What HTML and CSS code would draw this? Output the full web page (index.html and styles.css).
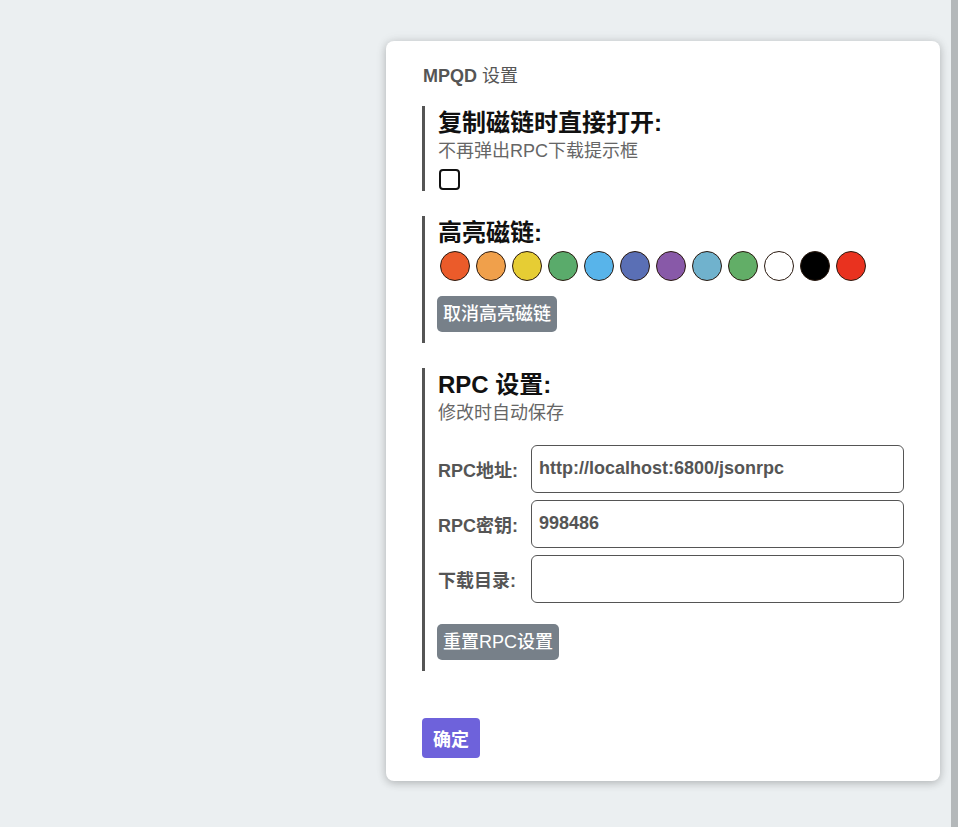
FILE: index.html
```html
<!DOCTYPE html>
<html lang="zh">
<head>
<meta charset="utf-8">
<title>MPQD 设置</title>
<link rel="stylesheet" href="styles.css">
</head>
<body>
<div class="page">
  <div class="card">
    <div class="card-title"><b class="brand">MPQD</b> 设置</div>

    <section class="group">
      <h2 class="group-title">复制磁链时直接打开:</h2>
      <div class="group-sub">不再弹出RPC下载提示框</div>
      <input class="check" type="checkbox">
    </section>

    <section class="group">
      <h2 class="group-title">高亮磁链:</h2>
      <div class="swatches">
        <span class="swatch c1"></span>
        <span class="swatch c2"></span>
        <span class="swatch c3"></span>
        <span class="swatch c4"></span>
        <span class="swatch c5"></span>
        <span class="swatch c6"></span>
        <span class="swatch c7"></span>
        <span class="swatch c8"></span>
        <span class="swatch c9"></span>
        <span class="swatch c10"></span>
        <span class="swatch c11"></span>
        <span class="swatch c12"></span>
      </div>
      <button class="btn-gray btn-clear">取消高亮磁链</button>
    </section>

    <section class="group group-rpc">
      <h2 class="group-title">RPC 设置:</h2>
      <div class="group-sub">修改时自动保存</div>
      <div class="fields">
        <label class="field">
          <span class="field-label">RPC地址:</span>
          <input class="field-input" type="text" value="http://localhost:6800/jsonrpc">
        </label>
        <label class="field">
          <span class="field-label">RPC密钥:</span>
          <input class="field-input" type="text" value="998486">
        </label>
        <label class="field">
          <span class="field-label">下载目录:</span>
          <input class="field-input" type="text" value="">
        </label>
      </div>
      <button class="btn-gray btn-reset">重置RPC设置</button>
    </section>

    <button class="btn-ok">确定</button>
  </div>
</div>
<div class="rail"></div>
</body>
</html>
```

FILE: styles.css
```css
* { box-sizing: border-box; }

html, body {
  margin: 0;
  height: 100%;
}

body {
  display: flex;
  background: #ebeff1;
  font-family: "Liberation Sans", "Noto Sans CJK SC", sans-serif;
  overflow: hidden;
}

.page {
  flex: 1;
  display: flex;
  justify-content: flex-end;
  align-items: flex-start;
  padding: 41px 11px 0 0;
}

.rail {
  width: 7px;
  background: #b4b8ba;
}

.card {
  width: 554px;
  background: #fff;
  border-radius: 8px;
  box-shadow: 0 2px 8px rgba(0, 0, 0, 0.22), 0 0 14px rgba(0, 0, 0, 0.06);
  padding: 25px 36px 23px 36px;
  display: flex;
  flex-direction: column;
  align-items: flex-start;
}

.card-title {
  font-size: 18px;
  line-height: 20px;
  font-weight: normal;
  color: #555;
  margin: 0 0 20px 1px;
}

.brand {
  font-weight: bold;
}

.group {
  align-self: stretch;
  border-left: 3px solid #555;
  padding: 0 0 11px 13px;
  margin-bottom: 25px;
  display: flex;
  flex-direction: column;
  align-items: flex-start;
}

.group:first-of-type {
  padding-bottom: 1px;
}

.group-rpc {
  margin-bottom: 47px;
}

.group-title {
  margin: 0;
  font-size: 24px;
  line-height: 34px;
  font-weight: bold;
  color: #111;
}

.group-sub {
  font-size: 18px;
  line-height: 22px;
  color: #666;
}

.check {
  appearance: none;
  -webkit-appearance: none;
  margin: 7px 0 0 1px;
  width: 21px;
  height: 21px;
  border: 2.5px solid #111;
  border-radius: 4px;
  background: #fff;
}

.swatches {
  display: flex;
  gap: 6px;
  padding-left: 2px;
  margin-top: 1px;
}

.swatch {
  width: 30px;
  height: 30px;
  border-radius: 50%;
  border: 1px solid #2a1a10;
}

.c1 { background: #eb5b2a; }
.c2 { background: #f0a04b; }
.c3 { background: #e6cd34; }
.c4 { background: #5aab6b; }
.c5 { background: #58b4ea; }
.c6 { background: #5a6fb5; }
.c7 { background: #8859a8; }
.c8 { background: #70b2cd; }
.c9 { background: #62ae67; }
.c10 { background: #ffffff; }
.c11 { background: #000000; }
.c12 { background: #e9321f; }

.btn-gray {
  border: none;
  background: #778089;
  color: #fff;
  font-family: inherit;
  font-size: 18px;
  font-weight: 500;
  line-height: 36px;
  height: 36px;
  padding: 0 6px;
  border-radius: 5px;
  margin-left: -1px;
}

.btn-clear {
  margin-top: 15px;
}

.fields {
  align-self: stretch;
  display: flex;
  flex-direction: column;
  gap: 7px;
  margin-top: 21px;
}

.field {
  display: flex;
  align-items: center;
}

.field-label {
  width: 93px;
  flex: none;
  font-size: 18px;
  font-weight: bold;
  color: #555;
}

.field-input {
  width: 373px;
  height: 48px;
  border: 1px solid #555;
  border-radius: 6px;
  padding: 0 0 2px 7px;
  font-family: inherit;
  font-size: 18px;
  font-weight: bold;
  color: #555;
  background: #fff;
  outline: none;
}

.btn-reset {
  margin-top: 21px;
}

.btn-ok {
  border: none;
  background: #6e62db;
  color: #fff;
  font-family: inherit;
  font-size: 18px;
  font-weight: bold;
  height: 40px;
  width: 58px;
  padding: 0;
  border-radius: 4px;
}
```
